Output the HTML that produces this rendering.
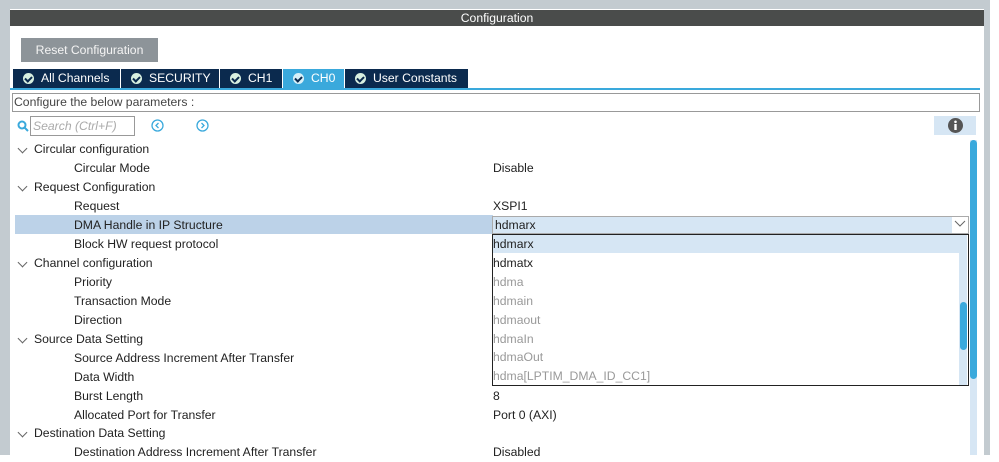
<!DOCTYPE html>
<html><head><style>
*{margin:0;padding:0;box-sizing:border-box}
body{width:999px;height:455px;overflow:hidden;background:#fff;font-family:"Liberation Sans",sans-serif;font-size:12.2px;color:#222;position:relative}
.a{position:absolute}
.row{position:absolute;left:15px;height:19px;line-height:19px;white-space:nowrap}
.chev{position:absolute;left:19px;width:7px;height:7px;border-right:1px solid #666;border-bottom:1px solid #666;transform:rotate(45deg)}
.tab{position:absolute;top:69px;height:19px;background:#0b2a4e;color:#fff;line-height:19px;font-size:12.2px;padding-left:28px}
.tab i{position:absolute;left:10px;top:4px;width:11px;height:11px;border-radius:50%;background:#d8f0e0}
.tab i:after{content:"";position:absolute;left:3px;top:2px;width:3px;height:5px;border-right:2px solid #0b2a4e;border-bottom:2px solid #0b2a4e;transform:rotate(45deg)}
.it{position:absolute;left:493px;width:467px;height:19px;line-height:19px;font-size:12.2px;color:#999}
</style></head><body>
<div class="a" style="left:0;top:0;width:999px;height:9px;background:#c3cbd0"></div>
<div class="a" style="left:0;top:0;width:10px;height:455px;background:#c3cbd0"></div>
<div class="a" style="left:984px;top:0;width:6px;height:455px;background:#c3cbd0"></div>
<div class="a" style="left:990px;top:0;width:9px;height:455px;background:#fff"></div>
<div class="a" style="left:10px;top:10px;width:974px;height:16px;background:#4a4c4b;color:#fff;text-align:center;line-height:16px">Configuration</div>
<div class="a" style="left:21px;top:38px;width:137px;height:24px;background:#8d9499;color:#f4f4f4;line-height:24px;text-align:center">Reset Configuration</div>
<div class="tab" style="left:13px;width:107px">All Channels<i></i></div>
<div class="tab" style="left:121px;width:98px">SECURITY<i></i></div>
<div class="tab" style="left:220px;width:62px">CH1<i></i></div>
<div class="tab" style="left:283px;width:61px;background:#3aa9dc">CH0<i style="background:#d8f0f8"></i></div>
<div class="tab" style="left:345px;width:123px">User Constants<i></i></div>
<div class="a" style="left:10px;top:88px;width:970px;height:2px;background:#3aa9dc"></div>
<div class="a" style="left:12px;top:93px;width:968px;height:19px;border:1px solid #999;line-height:17px;padding-left:1px;color:#444">Configure the below parameters :</div>
<svg class="a" style="left:17px;top:120px" width="12" height="12"><circle cx="5" cy="5" r="3.5" fill="none" stroke="#3aa9dc" stroke-width="2"/><line x1="7.5" y1="7.5" x2="11" y2="11" stroke="#3aa9dc" stroke-width="2"/></svg>
<div class="a" style="left:30px;top:116px;width:105px;height:20px;border:1px solid #999;color:#aaa;font-style:italic;line-height:18px;padding-left:2px">Search (Ctrl+F)</div>
<svg class="a" style="left:151px;top:119px" width="13" height="13"><circle cx="6.5" cy="6.5" r="5.5" fill="none" stroke="#3aa9dc" stroke-width="1.3"/><path d="M7.5 4 L5 6.5 L7.5 9" fill="none" stroke="#3aa9dc" stroke-width="1.3"/></svg>
<svg class="a" style="left:196px;top:119px" width="13" height="13"><circle cx="6.5" cy="6.5" r="5.5" fill="none" stroke="#3aa9dc" stroke-width="1.3"/><path d="M5.5 4 L8 6.5 L5.5 9" fill="none" stroke="#3aa9dc" stroke-width="1.3"/></svg>
<div class="a" style="left:934px;top:116px;width:42px;height:19px;background:#d6e6f4"></div>
<svg class="a" style="left:947px;top:117px" width="17" height="17"><circle cx="8.5" cy="8.5" r="7.5" fill="#555"/><rect x="7.3" y="7" width="2.4" height="6" fill="#fff"/><circle cx="8.5" cy="4.8" r="1.3" fill="#fff"/></svg>
<div class="a" style="left:15px;top:215px;width:478px;height:19px;background:#bcd2e8"></div>
<div id="rows"></div>
<script>
var r=[[1,"Circular configuration",""],[0,"Circular Mode","Disable"],[1,"Request Configuration",""],[0,"Request","XSPI1"],[0,"DMA Handle in IP Structure",""],[0,"Block HW request protocol",""],[1,"Channel configuration",""],[0,"Priority",""],[0,"Transaction Mode",""],[0,"Direction",""],[1,"Source Data Setting",""],[0,"Source Address Increment After Transfer",""],[0,"Data Width",""],[0,"Burst Length","8"],[0,"Allocated Port for Transfer","Port 0 (AXI)"],[1,"Destination Data Setting",""],[0,"Destination Address Increment After Transfer","Disabled"]];
var h="";r.forEach(function(x,i){var y=140+i*19-(i>14?1:0);
if(x[0])h+='<div class="chev" style="top:'+(y+5)+'px"></div><div class="row" style="top:'+y+'px;left:34px">'+x[1]+'</div>';
else h+='<div class="row" style="top:'+y+'px;left:74px">'+x[1]+'</div>';
if(x[2])h+='<div class="row" style="top:'+y+'px;left:493px">'+x[2]+'</div>';});
document.getElementById("rows").innerHTML=h;
</script>
<div class="a" style="left:492px;top:216px;width:477px;height:18px;border:1px solid #aaa;background:#d6e6f4;line-height:17px;padding-left:2px">hdmarx</div>
<div class="a" style="left:952px;top:217px;width:16px;height:16px;background:#fff"></div>
<svg class="a" style="left:954px;top:220px" width="12" height="8"><path d="M1 1 L6 6 L11 1" fill="none" stroke="#666"/></svg>
<div class="a" style="left:492px;top:234px;width:477px;height:152px;border:1px solid #222;background:#fff"></div>
<div class="a" style="left:493px;top:235px;width:474px;height:18px;background:#d6e6f4"></div>
<div class="a" style="left:959px;top:253px;width:8px;height:132px;background:#d6e6f4"></div>
<div class="a" style="left:960px;top:302px;width:7px;height:48px;border-radius:4px;background:#3aa9dc"></div>
<div class="it" style="top:235px;color:#222">hdmarx</div>
<div class="it" style="top:254px;color:#222">hdmatx</div>
<div class="it" style="top:273px">hdma</div>
<div class="it" style="top:292px">hdmain</div>
<div class="it" style="top:311px">hdmaout</div>
<div class="it" style="top:330px">hdmaIn</div>
<div class="it" style="top:348px">hdmaOut</div>
<div class="it" style="top:367px">hdma[LPTIM_DMA_ID_CC1]</div>
<div class="a" style="left:970px;top:140px;width:7px;height:315px;background:#d6e6f4"></div>
<div class="a" style="left:970px;top:140px;width:7px;height:239px;border-radius:4px;background:#3aa9dc"></div>
</body></html>
